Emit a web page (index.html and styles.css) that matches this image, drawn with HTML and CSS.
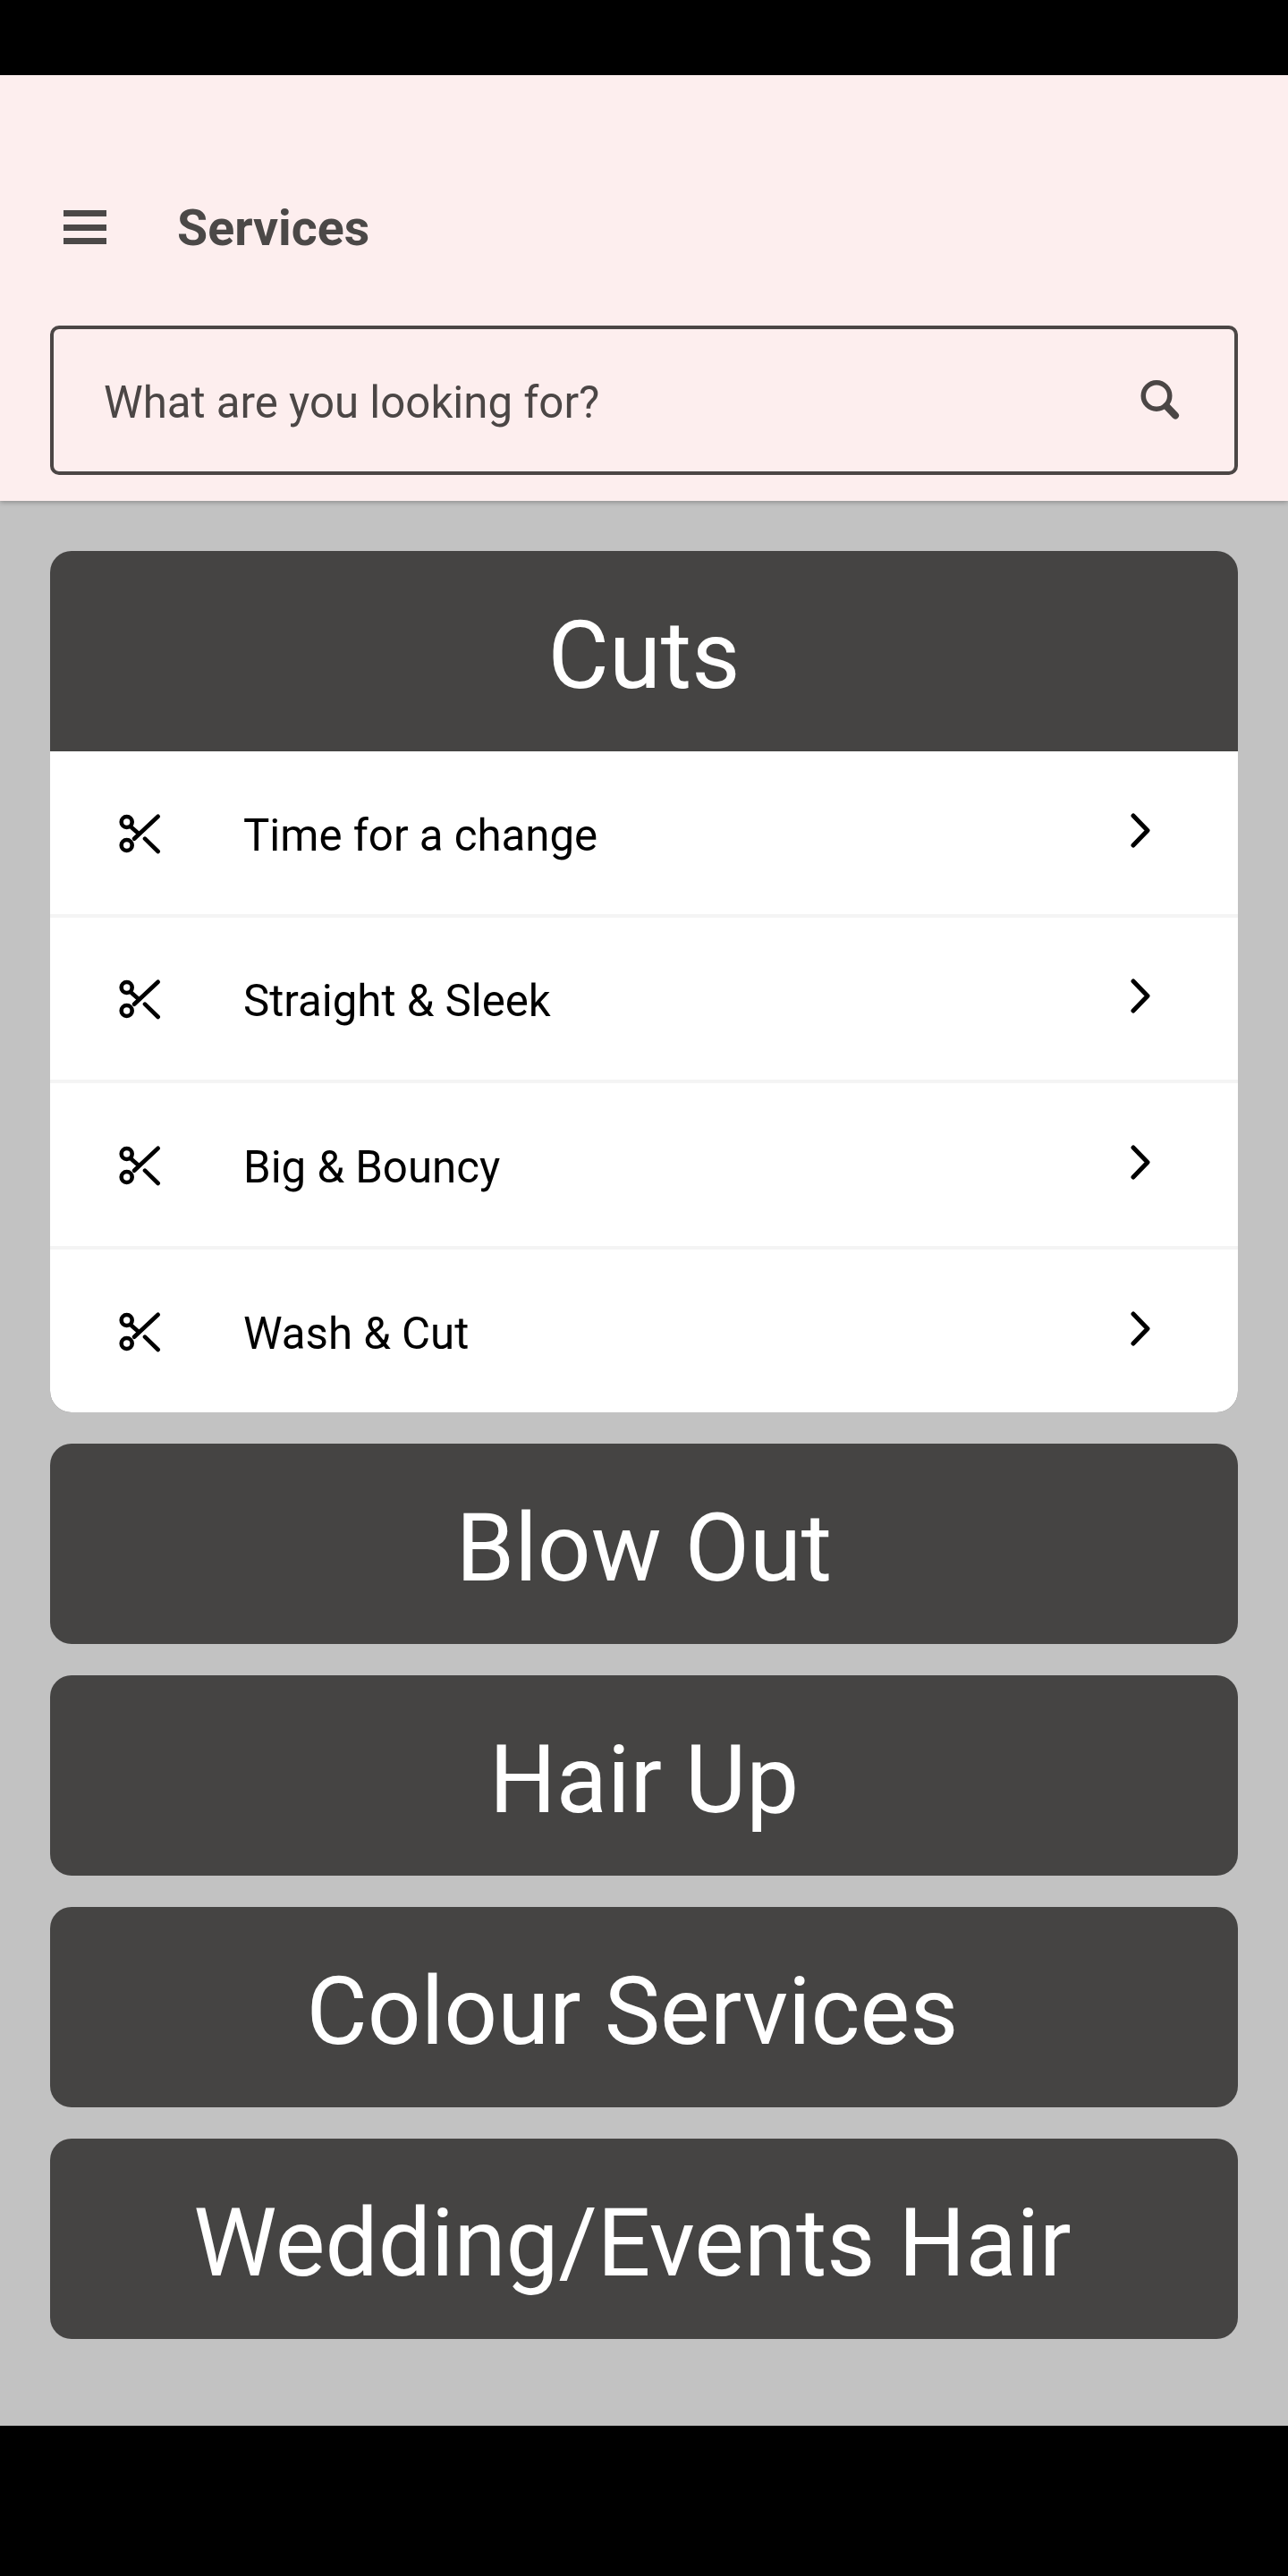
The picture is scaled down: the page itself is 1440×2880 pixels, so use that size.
FILE: index.html
```html
<!DOCTYPE html>
<html lang="en">
<head>
<meta charset="utf-8">
<title>Services</title>
<link rel="stylesheet" href="styles.css">
</head>
<body>
<div class="screen">
  <header class="header">
    <div class="toolbar">
      <div class="menu-icon"><span></span><span></span><span></span></div>
      <h1 class="title">Services</h1>
    </div>
    <div class="search">
      <span class="placeholder">What are you looking for?</span>
      <svg class="search-icon" viewBox="0 0 46 46" width="46" height="46"><circle cx="18" cy="17.500" r="14.750" fill="none" stroke="#4b4645" stroke-width="5.500"/><path d="M29 29 L39 39.500" fill="none" stroke="#4b4645" stroke-width="8" stroke-linecap="round"/></svg>
    </div>
  </header>
  <main class="content">
    <section class="card">
      <h2 class="card-title">Cuts</h2>
      <ul class="rows">
        <li class="row">
          <svg class="scissors" viewBox="0 0 48 48" width="48" height="48"><g fill="none" stroke="#000" stroke-width="4.600" stroke-linecap="round"><circle cx="9.700" cy="12" r="6"/><circle cx="9.700" cy="38" r="6"/><path d="M44.700 5.700 L18 30.700"/><path d="M15 18 L23 25"/><path d="M30 30.700 L44.700 45"/></g></svg>
          <span class="row-label">Time for a change</span>
          <svg class="chevron" viewBox="0 0 24 40" width="24" height="40"><path d="M3 3 L19 19.500 L3 36" fill="none" stroke="#000" stroke-width="5" stroke-linecap="round" stroke-linejoin="round"/></svg>
        </li>
        <li class="row">
          <svg class="scissors" viewBox="0 0 48 48" width="48" height="48"><g fill="none" stroke="#000" stroke-width="4.600" stroke-linecap="round"><circle cx="9.700" cy="12" r="6"/><circle cx="9.700" cy="38" r="6"/><path d="M44.700 5.700 L18 30.700"/><path d="M15 18 L23 25"/><path d="M30 30.700 L44.700 45"/></g></svg>
          <span class="row-label">Straight &amp; Sleek</span>
          <svg class="chevron" viewBox="0 0 24 40" width="24" height="40"><path d="M3 3 L19 19.500 L3 36" fill="none" stroke="#000" stroke-width="5" stroke-linecap="round" stroke-linejoin="round"/></svg>
        </li>
        <li class="row">
          <svg class="scissors" viewBox="0 0 48 48" width="48" height="48"><g fill="none" stroke="#000" stroke-width="4.600" stroke-linecap="round"><circle cx="9.700" cy="12" r="6"/><circle cx="9.700" cy="38" r="6"/><path d="M44.700 5.700 L18 30.700"/><path d="M15 18 L23 25"/><path d="M30 30.700 L44.700 45"/></g></svg>
          <span class="row-label">Big &amp; Bouncy</span>
          <svg class="chevron" viewBox="0 0 24 40" width="24" height="40"><path d="M3 3 L19 19.500 L3 36" fill="none" stroke="#000" stroke-width="5" stroke-linecap="round" stroke-linejoin="round"/></svg>
        </li>
        <li class="row">
          <svg class="scissors" viewBox="0 0 48 48" width="48" height="48"><g fill="none" stroke="#000" stroke-width="4.600" stroke-linecap="round"><circle cx="9.700" cy="12" r="6"/><circle cx="9.700" cy="38" r="6"/><path d="M44.700 5.700 L18 30.700"/><path d="M15 18 L23 25"/><path d="M30 30.700 L44.700 45"/></g></svg>
          <span class="row-label">Wash &amp; Cut</span>
          <svg class="chevron" viewBox="0 0 24 40" width="24" height="40"><path d="M3 3 L19 19.500 L3 36" fill="none" stroke="#000" stroke-width="5" stroke-linecap="round" stroke-linejoin="round"/></svg>
        </li>
      </ul>
    </section>
    <section class="card"><h2 class="card-title">Blow Out</h2></section>
    <section class="card"><h2 class="card-title">Hair Up</h2></section>
    <section class="card"><h2 class="card-title">Colour Services&nbsp;</h2></section>
    <section class="card"><h2 class="card-title">Wedding/Events Hair&nbsp;</h2></section>
  </main>
</div>
</body>
</html>
```
FILE: styles.css
```css
* { box-sizing: border-box; }
html, body { margin: 0; padding: 0; background: #000; }
body { font-family: Roboto, "Liberation Sans", sans-serif; }
.screen {
  width: 1440px;
  height: 2880px;
  padding: 84px 0 168px;
  display: flex;
  flex-direction: column;
}
.header {
  height: 476px;
  background: #fdeeee;
  padding: 116px 56px 0;
  box-shadow: 0 2px 5px rgba(0,0,0,.25);
  position: relative;
  z-index: 1;
}
.toolbar {
  display: flex;
  align-items: center;
  height: 108px;
  padding-left: 15px;
}
.menu-icon {
  width: 48px;
  height: 38px;
  display: flex;
  flex-direction: column;
  justify-content: space-between;
  margin-right: 79px;
}
.menu-icon span { display: block; height: 7px; background: #4b4847; }
.title {
  margin: 0;
  padding-top: 3px;
  font-size: 55.500px;
  line-height: 66px;
  font-weight: 700;
  color: #4b4847;
}
.search {
  margin-top: 56px;
  height: 167px;
  border: 4px solid #4b4645;
  border-radius: 10px;
  display: flex;
  align-items: center;
  justify-content: space-between;
  padding: 0 59px 0 56px;
}
.placeholder { font-size: 49.200px; line-height: 58px; padding-top: 5px; color: #4b4645; }
.search-icon { display: block; }
.content {
  flex: 1;
  background: #c2c2c2;
  padding: 56px 56px 0;
  display: flex;
  flex-direction: column;
  gap: 35px;
}
.card { background: #454443; border-radius: 24px; overflow: hidden; }
.card-title {
  margin: 0;
  height: 224px;
  padding-top: 10px;
  display: flex;
  align-items: center;
  justify-content: center;
  white-space: pre;
  font-size: 105px;
  font-weight: 400;
  color: #fff;
}
.rows { list-style: none; margin: 0; padding: 0; background: #fff; }
.row {
  height: 185.500px;
  display: flex;
  align-items: center;
  border-bottom: 4px solid #f4f4f4;
  padding: 0 96px 0 76px;
}
.row:last-child { height: 182.500px; border-bottom: 0; }
.scissors { display: block; flex: none; }
.row-label { flex: 1; margin-left: 92px; padding-top: 6px; font-size: 49.200px; line-height: 58px; color: #000; }
.chevron { display: block; flex: none; margin-top: -4px; }
```
